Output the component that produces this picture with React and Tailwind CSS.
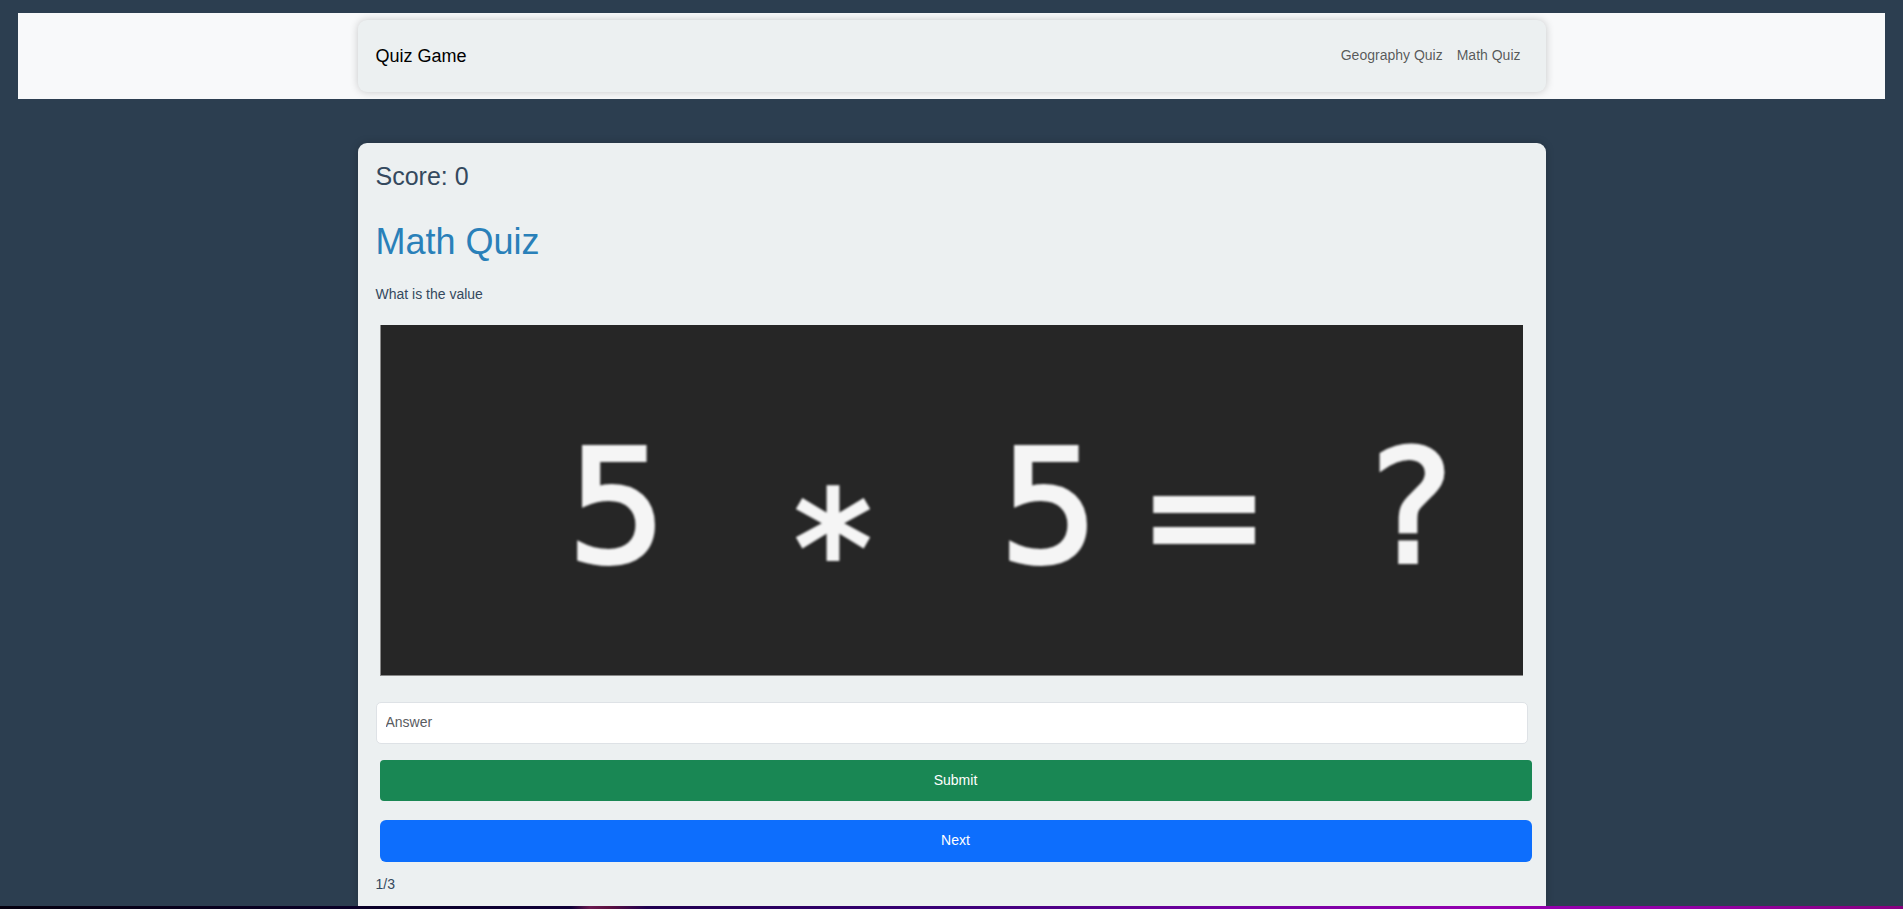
const glyphs = [
  { char: "5", x: 236, y: 237 },
  { char: "*", x: 452, y: 279 },
  { char: "5", x: 668, y: 237 },
  { char: "=", x: 823, y: 244 },
  { char: "?", x: 1031, y: 237 },
];

function QuestionBoard() {
  return (
    <svg
      viewBox="0 0 1142 350"
      role="img"
      aria-label="5 * 5 = ?"
      className="block w-full bg-[#262626]"
    >
      <g
        fill="#f5f5f5"
        stroke="#f5f5f5"
        strokeWidth="4"
        fontFamily="'DejaVu Sans', sans-serif"
        fontSize="156"
        textAnchor="middle"
        className="blur-[1px]"
      >
        {glyphs.map((g) => (
          <text key={g.x} x={g.x} y={g.y}>
            {g.char}
          </text>
        ))}
      </g>
    </svg>
  );
}

export default function App() {
  return (
    <div className="flex min-h-screen flex-col bg-[#2c3e50] font-['Liberation_Sans',Arial,sans-serif] text-[14px] leading-[22px] text-[#34495e]">
      <header className="mx-[18px] mt-[13px] overflow-hidden bg-[#f8f9fa] py-[7px]">
        <nav className="mx-auto flex h-[72px] max-w-[1188px] items-center justify-between rounded-[9px] bg-[#ecf0f1] px-[18px] shadow-[0_0_9px_rgba(0,0,0,0.2)]">
          <a href="#home" className="text-[18px] text-black">
            Quiz Game
          </a>
          <ul className="flex pb-[2px]">
            <li>
              <a href="#geography" className="px-[7px] text-black/65">
                Geography Quiz
              </a>
            </li>
            <li>
              <a href="#math" className="px-[7px] text-black/65">
                Math Quiz
              </a>
            </li>
          </ul>
        </nav>
      </header>

      <main className="mx-auto mt-[44px] w-full max-w-[1188px] grow rounded-t-[9px] bg-[#ecf0f1] px-[18px] pt-[18px] shadow-[0_0_9px_rgba(0,0,0,0.2)]">
        <h2 className="text-[25px] leading-[30px]">Score: 0</h2>
        <h1 className="mt-[29px] text-[36px] leading-[43px] text-[#2980b9]">Math Quiz</h1>
        <p className="mt-[20px]">What is the value</p>
        <div className="mt-[20px] pr-[5px] pl-[4px]">
          <div className="border-b border-l border-[#888888]">
            <QuestionBoard />
          </div>
        </div>
        <form className="mt-[26px]" onSubmit={(e) => e.preventDefault()}>
          <input
            type="text"
            aria-label="Answer"
            placeholder="Answer"
            className="block h-[42px] w-full rounded-[5px] border border-[#dee2e6] bg-white px-[9px] pb-[2px] placeholder:text-[#595c5f]"
          />
          <div className="mt-[16px] -mr-[4px] ml-[4px] flex flex-col gap-[19px]">
            <button type="submit" className="h-[41px] rounded-[4px] bg-[#198754] pb-[2px] text-white">
              Submit
            </button>
            <button type="button" className="h-[42px] rounded-[6px] bg-[#0d6efd] pb-[2px] text-white">
              Next
            </button>
          </div>
        </form>
        <p className="mt-[11px]">1/3</p>
      </main>

      <footer className="relative h-[3px] bg-[linear-gradient(90deg,#05000f_0%,#0c0030_25%,#100038_30%,#6a1a50_31%,#5c1040_32%,#200050_34%,#3a0078_50%,#7000a0_64%,#9400b0_78%,#9400a8_88%,#880080_100%)]" />
    </div>
  );
}
